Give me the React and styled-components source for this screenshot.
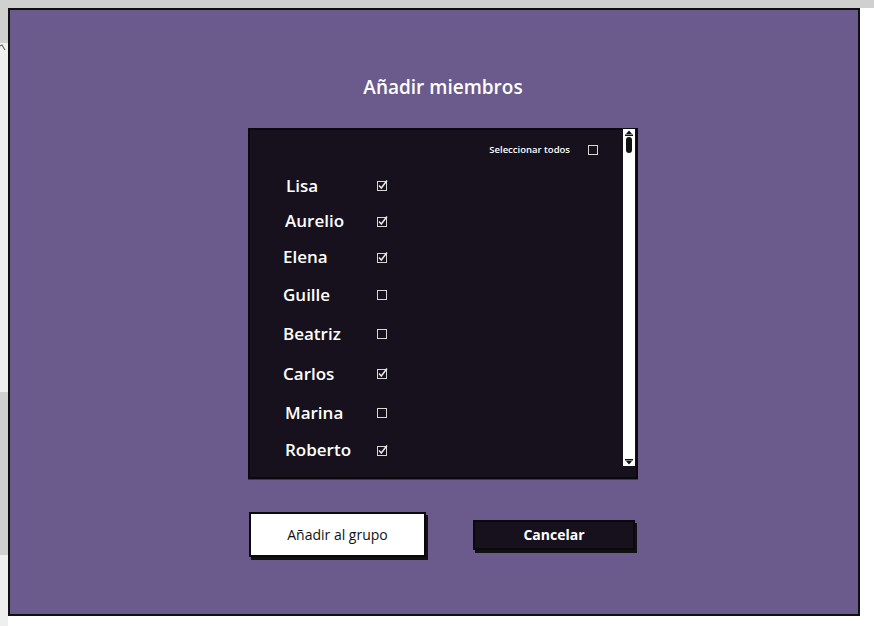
import React from "react";
import styled, { createGlobalStyle } from "styled-components";

const GlobalStyle = createGlobalStyle`
  * { box-sizing: border-box; }
  html, body {
    margin: 0;
    padding: 0;
    background: #ffffff;
    font-family: "Open Sans", "Liberation Sans", sans-serif;
  }
`;

const Page = styled.div`
  width: 874px;
  height: 626px;
  display: flex;
  flex-direction: column;
  overflow: hidden;
`;

const TopBand = styled.div`
  height: 8px;
  flex: none;
  background: #d0d0d0;
`;

const Middle = styled.div`
  flex: 1;
  display: flex;
`;

const LeftStrip = styled.div`
  width: 8px;
  flex: none;
  display: flex;
  flex-direction: column;
`;

const StripPart = styled.div`
  height: ${({ h }) => (h ? `${h}px` : "auto")};
  flex: ${({ h }) => (h ? "none" : "1")};
  background: ${({ light }) => (light ? "#efefef" : "#d0d0d0")};
  position: relative;
`;

const Caret = styled.svg`
  position: absolute;
  left: 0;
  top: 1px;
`;

const Stage = styled.div`
  flex: 1;
  display: flex;
  flex-direction: column;
`;

const Panel = styled.div`
  width: 852px;
  height: 608px;
  background: #6b5a8c;
  border: 2px solid #111;
  padding: 64px 0 0 238px;
`;

const Column = styled.div`
  width: 390px;
  display: flex;
  flex-direction: column;
`;

const Title = styled.h1`
  margin: 0;
  height: 26px;
  font-size: 19px;
  line-height: 26px;
  font-weight: 600;
  color: #ffffff;
  text-align: center;
`;

const ListBox = styled.div`
  margin-top: 28px;
  height: 351px;
  background: #17111d;
  border: 2px solid #0b080e;
  box-shadow: 0 1px 0 rgba(0, 0, 0, 0.4);
  display: flex;
`;

const ListInner = styled.div`
  flex: 1;
  display: flex;
  flex-direction: column;
  padding: 11px 0 0 33px;
`;

const SelectAllRow = styled.label`
  display: flex;
  align-items: center;
  justify-content: flex-end;
  gap: 17px;
  padding-right: 24px;
  height: 16px;
  font-size: 9.5px;
  font-weight: 600;
  color: #ffffff;
`;

const Rows = styled.div`
  margin-top: 10px;
  display: flex;
  flex-direction: column;
`;

const Row = styled.div`
  height: ${({ h }) => h}px;
  display: flex;
  align-items: center;
`;

const Name = styled.span`
  width: 93px;
  padding-left: ${({ shift }) => shift}px;
  font-size: 17px;
  font-weight: 600;
  color: #ffffff;
`;

const Scrollbar = styled.div`
  width: 12px;
  margin: -1px 1px 11px 0;
  background: #ffffff;
  display: flex;
  flex-direction: column;
  align-items: center;
  justify-content: space-between;
  padding: 1px 0;
`;

const Thumb = styled.div`
  width: 6px;
  height: 16px;
  margin-top: 1px;
  background: #111;
  border-radius: 3px;
`;

const Spacer = styled.div`
  flex: 1;
`;

const Buttons = styled.div`
  margin-top: 33px;
  display: flex;
  align-items: center;
  gap: 47px;
  padding-left: 1px;
`;

const Button = styled.button`
  font-family: inherit;
  font-size: 14px;
  cursor: pointer;
  border: 2px solid #0b080e;
  box-shadow: 2px 3px 0 #111;
  width: ${({ primary }) => (primary ? "177px" : "162px")};
  height: ${({ primary }) => (primary ? "45px" : "30px")};
  background: ${({ primary }) => (primary ? "#ffffff" : "#17111d")};
  color: ${({ primary }) => (primary ? "#111111" : "#ffffff")};
  font-weight: ${({ primary }) => (primary ? 500 : 700)};
`;

const Filler = styled.div`
  flex: 1;
  background: #ffffff;
`;

const Check = ({ checked }) => (
  <svg width="12" height="12" viewBox="0 0 12 12">
    <rect x="1.5" y="2.5" width="9" height="9" fill="none" stroke="#d6d6d6" strokeWidth="1" />
    {checked && (
      <path d="M3 6.5 L5.3 9 L11 1.5" fill="none" stroke="#e8e8e8" strokeWidth="1.5" />
    )}
  </svg>
);

const ArrowUp = () => (
  <svg width="8" height="6" viewBox="0 0 8 6">
    <rect x="0" y="4.5" width="8" height="1.5" fill="#111" />
    <path d="M1 4 L4 0.5 L7 4 Z" fill="#111" />
  </svg>
);

const ArrowDown = () => (
  <svg width="8" height="6" viewBox="0 0 8 6">
    <rect x="0" y="0" width="8" height="1.5" fill="#111" />
    <path d="M1 2 L4 5.5 L7 2 Z" fill="#111" />
  </svg>
);

// row heights follow the uneven spacing of the mockup
const members = [
  { name: "Lisa", checked: true, shift: 3, h: 36 },
  { name: "Aurelio", checked: true, shift: 2, h: 35 },
  { name: "Elena", checked: true, shift: 0, h: 37 },
  { name: "Guille", checked: false, shift: 0, h: 38.5 },
  { name: "Beatriz", checked: false, shift: 0, h: 39.5 },
  { name: "Carlos", checked: true, shift: 0, h: 40 },
  { name: "Marina", checked: false, shift: 2, h: 38 },
  { name: "Roberto", checked: true, shift: 2, h: 37 },
];

const App = () => {
  return (
    <Page>
      <GlobalStyle />
      <TopBand />
      <Middle>
        <LeftStrip>
          <StripPart h={35} />
          <StripPart h={349} light>
            <Caret width="6" height="8" viewBox="0 0 6 8">
              <path d="M0 2 L2 1 L5 6" fill="none" stroke="#666" strokeWidth="1.2" />
            </Caret>
          </StripPart>
          <StripPart h={163} />
          <StripPart light />
        </LeftStrip>
        <Stage>
          <Panel>
            <Column>
              <Title>Añadir miembros</Title>
              <ListBox>
                <ListInner>
                  <SelectAllRow>
                    Seleccionar todos
                    <Check checked={false} />
                  </SelectAllRow>
                  <Rows>
                    {members.map((m) => (
                      <Row key={m.name} h={m.h}>
                        <Name shift={m.shift}>{m.name}</Name>
                        <Check checked={m.checked} />
                      </Row>
                    ))}
                  </Rows>
                </ListInner>
                <Scrollbar>
                  <ArrowUp />
                  <Thumb />
                  <Spacer />
                  <ArrowDown />
                </Scrollbar>
              </ListBox>
              <Buttons>
                <Button primary>Añadir al grupo</Button>
                <Button>Cancelar</Button>
              </Buttons>
            </Column>
          </Panel>
          <Filler />
        </Stage>
      </Middle>
    </Page>
  );
};

export default App;
